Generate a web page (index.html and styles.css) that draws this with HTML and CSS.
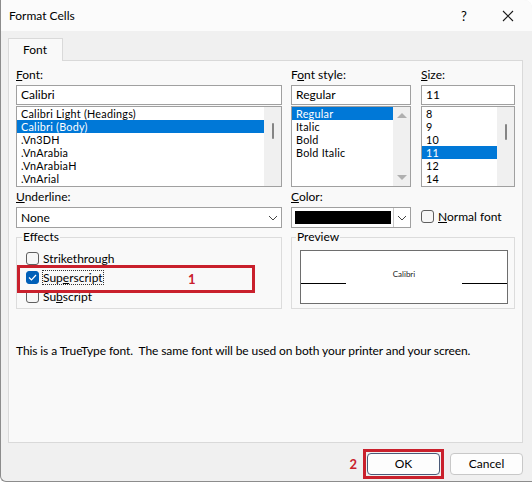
FILE: index.html
```html
<!DOCTYPE html>
<html>
<head>
<meta charset="utf-8">
<link rel="stylesheet" href="styles.css">
</head>
<body>
<div class="win">
  <div class="titlebar">
    <span class="title">Format Cells</span>
    <span class="help">?</span>
    <span class="close"><svg width="12" height="12" viewBox="0 0 12 12"><path d="M1 1 L11 11 M11 1 L1 11" stroke="#1a1a1a" stroke-width="1.1" fill="none"/></svg></span>
  </div>
  <div class="content">
    <div class="tabs"><div class="tab">Font</div></div>
    <div class="panel">
      <div class="row1">
        <div class="col c1">
          <div class="lbl"><u>F</u>ont:</div>
          <div class="input">Calibri</div>
          <div class="list">
            <div class="items">
              <div class="item">Calibri Light (Headings)</div>
              <div class="item sel">Calibri (Body)</div>
              <div class="item">.Vn3DH</div>
              <div class="item">.VnArabia</div>
              <div class="item">.VnArabiaH</div>
              <div class="item">.VnArial</div>
            </div>
            <div class="sb"><div class="thumb t1"></div></div>
          </div>
        </div>
        <div class="col c2">
          <div class="lbl">F<u>o</u>nt style:</div>
          <div class="input">Regular</div>
          <div class="list">
            <div class="items">
              <div class="item sel">Regular</div>
              <div class="item">Italic</div>
              <div class="item">Bold</div>
              <div class="item">Bold Italic</div>
            </div>
            <div class="sb arrows">
              <span class="tri up"></span>
              <span class="tri down"></span>
            </div>
          </div>
        </div>
        <div class="col c3">
          <div class="lbl"><u>S</u>ize:</div>
          <div class="input">11</div>
          <div class="list">
            <div class="items">
              <div class="item">8</div>
              <div class="item">9</div>
              <div class="item">10</div>
              <div class="item sel">11</div>
              <div class="item">12</div>
              <div class="item">14</div>
            </div>
            <div class="sb"><div class="thumb t3"></div></div>
          </div>
        </div>
      </div>
      <div class="row2">
        <div class="col c1">
          <div class="lbl"><u>U</u>nderline:</div>
          <div class="combo">
            <span class="cval">None</span>
            <span class="cbtn"><svg width="10" height="6" viewBox="0 0 10 6"><path d="M1 1 L5 5 L9 1" stroke="#444" stroke-width="1" fill="none"/></svg></span>
          </div>
        </div>
        <div class="col c2">
          <div class="lbl"><u>C</u>olor:</div>
          <div class="combo">
            <span class="swatch"></span>
            <span class="cbtn sep"><svg width="10" height="6" viewBox="0 0 10 6"><path d="M1 1 L5 5 L9 1" stroke="#444" stroke-width="1" fill="none"/></svg></span>
          </div>
        </div>
        <div class="col c3">
          <div class="nf"><span class="cb"></span><span><u>N</u>ormal font</span></div>
        </div>
      </div>
      <div class="row3">
        <fieldset class="grp effects">
          <legend>Effects</legend>
          <div class="chk"><span class="cb"></span><span>Strikethrough</span></div>
          <div class="chk"><span class="cb on"><svg width="9" height="7" viewBox="0 0 9 7"><path d="M1 3.5 L3.5 6 L8 1" stroke="#fff" stroke-width="1.2" fill="none"/></svg></span><span class="focus">Sup<u>e</u>rscript</span></div>
          <div class="chk"><span class="cb"></span><span>Su<u>b</u>script</span></div>
          <div class="mark m1"><span class="num">1</span></div>
        </fieldset>
        <fieldset class="grp preview">
          <legend>Preview</legend>
          <div class="pbox">
            <span class="pline"></span>
            <span class="ptext">Calibri</span>
            <span class="pline"></span>
          </div>
        </fieldset>
      </div>
      <p class="note">This is a TrueType font.&nbsp; The same font will be used on both your printer and your screen.</p>
    </div>
    <div class="buttons">
      <span class="num n2">2</span>
      <div class="okwrap"><div class="btn ok">OK</div></div>
      <div class="btn">Cancel</div>
    </div>
  </div>
</div>
</body>
</html>
```
FILE: styles.css
```css
* { box-sizing: border-box; }
html, body { margin: 0; padding: 0; }
body {
  width: 532px; height: 484px; overflow: hidden;
  font-family: Lato, "Liberation Sans", sans-serif;
  font-size: 12px; color: #000; background: #fff;
}
.win {
  width: 532px; height: 482px;
  background: #f0f0f0;
  border-left: 1px solid #8c8c8c;
  border-bottom: 1px solid #8c8c8c;
  border-top-right-radius: 8px;
  border-bottom-left-radius: 6px;
  overflow: hidden;
}
.titlebar {
  height: 31px; background: #fbfbfb;
  display: flex; align-items: center;
  padding-left: 8px;
}
.title { flex: 1; font-size: 12px; }
.help { width: 20px; text-align: center; margin-right: 28px; font-size: 13px; }
.close { width: 12px; margin-right: 18px; display: flex; }
.content { padding: 7px 9px 0 7px; }
.tabs { display: flex; height: 22px; }
.tab {
  width: 55px; height: 23px; background: #f9f9f9;
  border: 1px solid #d9d9d9; border-bottom: none;
  padding-left: 14px; line-height: 22px;
  position: relative; z-index: 1;
}
.panel {
  height: 383px; background: #f9f9f9;
  border: 1px solid #d9d9d9;
  padding: 6px 7px 0 7px;
}
.row1, .row2, .row3 { display: flex; }
.c1 { width: 266px; }
.c2 { width: 120px; margin-left: 9px; }
.c3 { width: 94px; margin-left: 10px; }
.lbl { height: 16px; line-height: 16px; margin-bottom: 2px; }
.input {
  height: 20px; background: #fff; border: 1px solid #a0a0a0;
  line-height: 18px; padding-left: 4px;
}
.list {
  margin-top: 1px; height: 81px; background: #fff;
  border: 1px solid #a0a0a0; display: flex;
}
.items { flex: 1; padding-top: 0; }
.item {
  height: 13px; line-height: 13px; padding-left: 4px; white-space: nowrap;
  font-size: 10.8px; letter-spacing: 0.25px;
}
.item.sel { background: #0078d7; color: #fff; }
.sb { width: 17px; background: #f0f0f0; display: flex; justify-content: center; }
.thumb { width: 2px; background: #858585; border-radius: 1px; }
.t1 { margin-top: 16px; height: 16px; }
.t3 { margin-top: 17px; height: 16px; }
.arrows { flex-direction: column; align-items: center; justify-content: space-between; padding: 6px 0 6px; }
.tri { width: 0; height: 0; border-left: 5px solid transparent; border-right: 5px solid transparent; }
.tri.up { border-bottom: 5px solid #b0b0b0; }
.tri.down { border-top: 5px solid #b0b0b0; }
.row2 { margin-top: 2px; }
.combo {
  height: 21px; background: #fff; border: 1px solid #a0a0a0;
  display: flex; align-items: stretch;
}
.cval { flex: 1; line-height: 19px; padding-left: 4px; }
.swatch { flex: 1; margin: 3px 2px 3px 3px; background: #000; }
.cbtn { width: 17px; display: flex; align-items: center; justify-content: center; }
.cbtn.sep { border-left: 1px solid #c8c8c8; }
.nf { display: flex; align-items: center; margin-top: 20px; height: 14px; }
.cb {
  width: 13px; height: 13px; border: 1px solid #5f5f5f; border-radius: 3px;
  background: #f7f7f7; display: inline-flex; align-items: center; justify-content: center;
  margin-right: 4px; flex: none;
}
.cb.on { background: #005fb8; border-color: #005fb8; }
.row3 { margin-top: 2px; }
.grp {
  margin: 0; border: 1px solid #dcdcdc; padding: 0;
  height: 79px; position: relative;
}
.grp legend { padding: 0 1px; margin-left: -4px; line-height: 14px; }
.effects { width: 266px; padding: 5px 0 0 9px; }
.preview { width: 224px; margin-left: 9px; padding: 6px 0 0 8px; }
.chk { display: flex; align-items: center; height: 19px; }
.focus { outline: 1px dotted #333; outline-offset: 0; line-height: 13px; }
.mark {
  position: absolute; left: 0px; top: 21px; width: 238px; height: 28px;
  border: 3px solid #c9202c; pointer-events: none;
}
.num { color: #c9202c; font-weight: bold; font-size: 13px; }
.m1 .num { position: absolute; left: 168px; top: 3px; line-height: 16px; }
.pbox {
  width: 208px; height: 54px; background: #fff; border: 1px solid #6e6e6e;
  display: flex; align-items: flex-start;
}
.pline { width: 45px; height: 1px; background: #000; margin-top: 32px; }
.ptext { flex: 1; text-align: center; font-size: 8px; margin-top: 18px; color: #222; }
.note { margin: 34px 0 0 0; line-height: 16px; letter-spacing: -0.1px; }
.buttons { display: flex; justify-content: flex-end; align-items: center; margin-top: 6px; height: 30px; }
.n2 { margin-right: 6px; }
.okwrap { border: 3px solid #c9202c; padding: 1px; margin-right: 6px; }
.btn {
  width: 73px; height: 22px; background: #fdfdfd; border: 1px solid #c8c8c8;
  border-radius: 4px; text-align: center; line-height: 20px;
}
.btn.ok { border-color: #4a5a78; }
```
